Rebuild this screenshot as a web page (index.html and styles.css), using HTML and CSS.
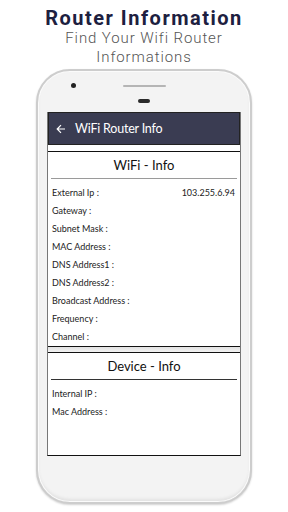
FILE: index.html
```html
<!DOCTYPE html>
<html>
<head>
<meta charset="utf-8">
<link rel="stylesheet" href="styles.css">
</head>
<body>
<header class="promo">
  <h1 class="promo-title">Router Information</h1>
  <p class="promo-sub">Find Your Wifi Router<br>Informations</p>
</header>
<div class="phone">
  <div class="phone-top">
    <div class="sensor-row">
      <span class="camera"></span>
      <span class="speaker"></span>
      <span></span>
    </div>
    <span class="pill"></span>
  </div>
  <div class="screen">
    <div class="appbar">
      <svg class="back" width="10" height="10" viewBox="0 0 10 10"><path d="M9 5H1.5M5 1.2L1.2 5 5 8.8" fill="none" stroke="#fff" stroke-width="1.2"/></svg>
      <span class="appbar-title">WiFi Router Info</span>
    </div>
    <section class="card card-wifi">
      <h2 class="card-title">WiFi - Info</h2>
      <div class="row"><span>External Ip :</span><span>103.255.6.94</span></div>
      <div class="row"><span>Gateway :</span></div>
      <div class="row"><span>Subnet Mask :</span></div>
      <div class="row"><span>MAC Address :</span></div>
      <div class="row"><span>DNS Address1 :</span></div>
      <div class="row"><span>DNS Address2 :</span></div>
      <div class="row"><span>Broadcast Address :</span></div>
      <div class="row"><span>Frequency :</span></div>
      <div class="row"><span>Channel :</span></div>
    </section>
    <div class="band"></div>
    <section class="card card-device">
      <h2 class="card-title dark">Device - Info</h2>
      <div class="row"><span>Internal IP :</span></div>
      <div class="row"><span>Mac Address :</span></div>
    </section>
  </div>
</div>
</body>
</html>
```
FILE: styles.css
```css
* { box-sizing: border-box; }
html, body { margin: 0; padding: 0; background: #fff; }
body { width: 288px; height: 512px; overflow: hidden; font-family: Roboto, "Noto Sans", sans-serif; }

.promo { text-align: center; padding-top: 7px; }
.promo-title {
  margin: 0;
  font-size: 20px;
  line-height: 22px;
  font-weight: 700;
  letter-spacing: 1.5px;
  color: #1d2040;
}
.promo-sub {
  margin: 0;
  font-size: 15px;
  line-height: 19px;
  font-weight: 300;
  letter-spacing: 0.9px;
  color: #555;
}

.phone {
  width: 216px;
  height: 435px;
  margin: 2px auto 0;
  border: 2px solid #cdcdcd;
  border-radius: 34px;
  background: #f3f3f3;
  box-shadow: inset 0 0 0 1px #fbfbfb, inset 0 -3px 3px #e2e2e2, 0 1px 2px rgba(0,0,0,0.18);
  display: flex;
  flex-direction: column;
  align-items: center;
}
.phone-top {
  width: 100%;
  height: 41px;
  padding-top: 12px;
  display: flex;
  flex-direction: column;
  align-items: center;
}
.sensor-row {
  width: 100%;
  display: grid;
  grid-template-columns: 1fr auto 1fr;
  align-items: center;
  height: 5px;
}
.camera {
  width: 5px; height: 5px; border-radius: 50%;
  background: #222;
  margin-left: 33px;
}
.speaker {
  width: 43px; height: 2px; background: #b5b5b5; border-radius: 1px;
}
.pill {
  margin-top: 11px;
  width: 12px; height: 4px; border-radius: 2px; background: #2a2a2a;
}

.screen {
  width: 194px;
  height: 344px;
  background: #fff;
  border-left: 1px solid #777;
  border-right: 1px solid #777;
  border-bottom: 1px solid #111;
  display: flex;
  flex-direction: column;
  font-family: Lato, "Noto Sans", sans-serif;
}
.appbar {
  height: 33px;
  background: #3a3c52;
  border: 1px solid #222;
  display: flex;
  align-items: center;
  gap: 9px;
  padding-left: 7px;
  color: #fff;
}
.back { flex: none; }
.appbar-title { font-size: 12.5px; letter-spacing: -0.2px; }

.card { display: flex; flex-direction: column; }
.card-wifi {
  margin-top: 6px;
  border-top: 1.5px solid #111;
  border-bottom: 1.5px solid #111;
  height: 196px;
}
.card-title {
  margin: 0 3px;
  font-weight: 400;
  font-size: 13px;
  line-height: 26px;
  text-align: center;
  color: #111;
  border-bottom: 1.5px solid #9a9a9a;
}
.card-title.dark { border-bottom-color: #333; }
.row {
  display: flex;
  justify-content: space-between;
  padding: 0 5px 0 4px;
  height: 18.2px;
  align-items: center;
  font-size: 9px;
  color: #222;
}
.card-title + .row { margin-top: 4px; }
.band {
  height: 5px;
  background: linear-gradient(#e2e2e2, #f2f2f2);
}
.card-device {
  flex: 1;
  border-top: 1.5px solid #111;
}
```
